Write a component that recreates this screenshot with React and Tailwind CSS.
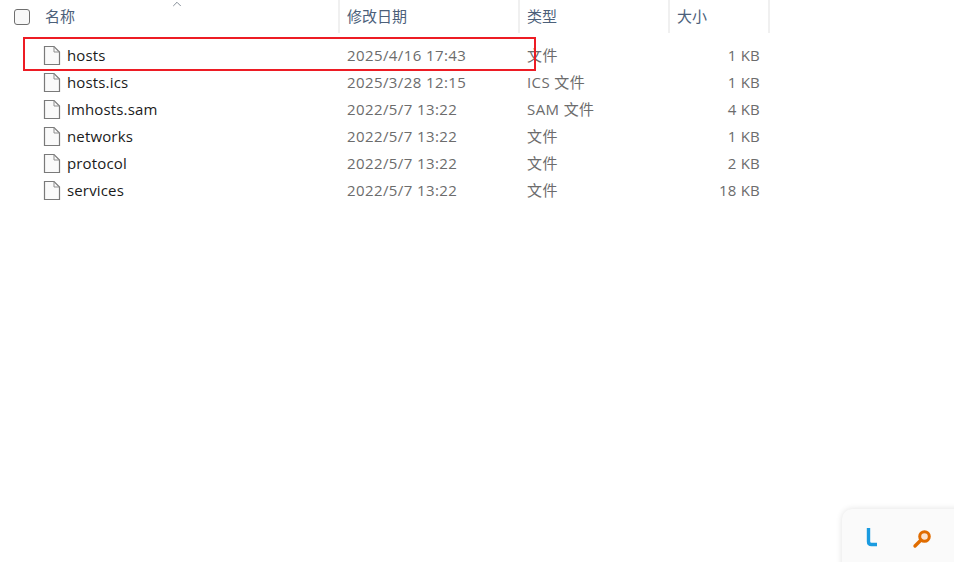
import { ChevronUp } from "lucide-react";

const files = [
  { name: "hosts", date: "2025/4/16 17:43", type: "文件", size: "1 KB" },
  { name: "hosts.ics", date: "2025/3/28 12:15", type: "ICS 文件", size: "1 KB" },
  { name: "lmhosts.sam", date: "2022/5/7 13:22", type: "SAM 文件", size: "4 KB" },
  { name: "networks", date: "2022/5/7 13:22", type: "文件", size: "1 KB" },
  { name: "protocol", date: "2022/5/7 13:22", type: "文件", size: "2 KB" },
  { name: "services", date: "2022/5/7 13:22", type: "文件", size: "18 KB" },
];

function FileIcon() {
  return (
    <svg width="18" height="21" viewBox="0 0 18 21" className="shrink-0">
      <path d="M1.5 1.5H11L16.5 7V19.5H1.5Z" fill="#fafafa" stroke="#7a7a7a" strokeWidth="1.2" />
      <path d="M11 1.5V7H16.5" fill="none" stroke="#8f8f8f" strokeWidth="1" />
    </svg>
  );
}

export default function App() {
  return (
    <div className="relative w-[954px] h-[562px] overflow-hidden bg-white font-['Open_Sans','Noto_Sans_CJK_SC',sans-serif] text-[15px]">
      <div className="absolute left-[170px] top-[-3px] text-[#5f6b78]">
        <ChevronUp size={14} strokeWidth={1.3} />
      </div>

      <div className="flex h-[33px] text-[#4c607a]">
        <div className="flex w-[340px] items-center border-r-2 border-[#f0f0f0]">
          <div className="ml-[14px] h-4 w-4 rounded-[3px] border border-[#6f6f6f] bg-[#f8f8f8]" />
          <span className="ml-[15px]">名称</span>
        </div>
        <div className="flex w-[180px] items-center border-r-2 border-[#f0f0f0] pl-[7px]">修改日期</div>
        <div className="flex w-[150px] items-center border-r-2 border-[#f0f0f0] pl-[7px]">类型</div>
        <div className="flex w-[100px] items-center border-r-2 border-[#f0f0f0] pl-[7px]">大小</div>
      </div>

      <div className="pt-[9px]">
        {files.map((f) => (
          <div key={f.name} className="flex h-[27px] items-center">
            <div className="flex w-[340px] items-center pl-[43px]">
              <FileIcon />
              <span className="ml-[6px] tracking-[0.15px] text-[#1b1b1b]">{f.name}</span>
            </div>
            <div className="w-[180px] pl-[7px] tracking-[0.4px] text-[#6c6c6c]">{f.date}</div>
            <div className="w-[150px] pl-[7px] tracking-[0.4px] text-[#6c6c6c]">{f.type}</div>
            <div className="w-[90px] text-right tracking-[0.2px] text-[#6c6c6c]">{f.size}</div>
          </div>
        ))}
      </div>

      <div className="absolute left-[23px] top-[37px] h-[34px] w-[513px] border-2 border-[#ed1c24]" />

      <div className="absolute left-[842px] top-[509px] flex h-[60px] w-[120px] items-start gap-[33px] rounded-tl-[10px] bg-[#fafafa] pl-[23px] pt-[18px] shadow-[0_0_6px_rgba(0,0,0,0.12)]">
        <svg width="14" height="22" viewBox="0 0 14 22">
          <path d="M3.5 1V14.5Q3.5 17.5 6.5 17.5H12" fill="none" stroke="#1a9be0" strokeWidth="3.4" />
        </svg>
        <svg width="20" height="20" viewBox="0 0 20 20" className="mt-[2px]">
          <circle cx="12.5" cy="7.5" r="4.8" fill="#fbe3cf" stroke="#e06c00" strokeWidth="3" />
          <path d="M9 11L3 17" stroke="#e06c00" strokeWidth="3.4" strokeLinecap="round" />
        </svg>
      </div>
    </div>
  );
}
